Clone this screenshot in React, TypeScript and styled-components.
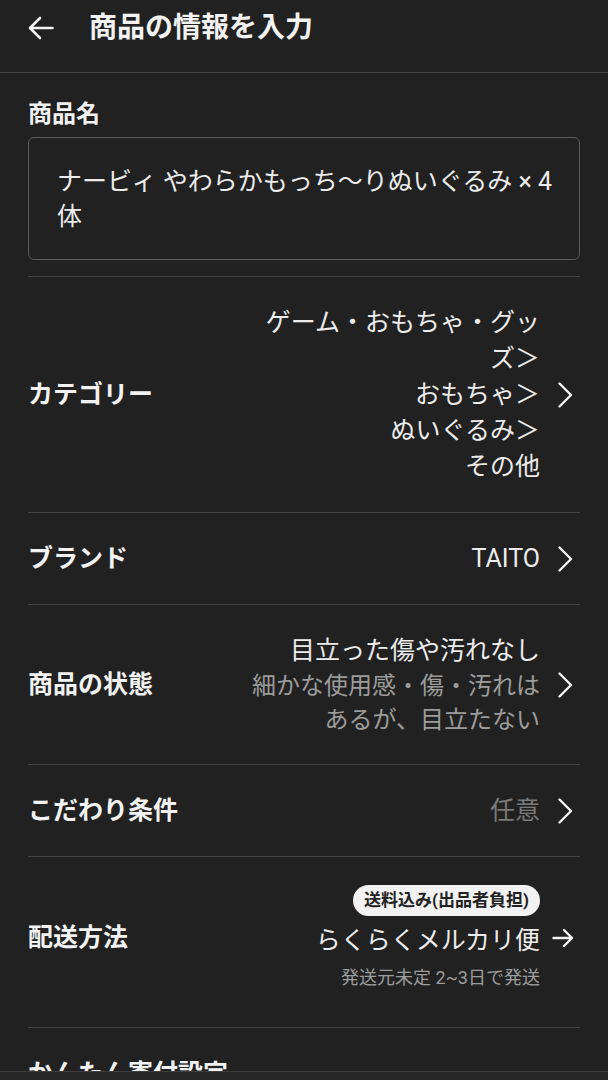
import styled, { createGlobalStyle } from 'styled-components';

const GlobalStyle = createGlobalStyle`
  html, body {
    margin: 0;
    padding: 0;
    background: #212121;
  }
  body {
    font-family: Roboto, "Noto Sans CJK JP", "Noto Sans", sans-serif;
    color: #f0f0f0;
  }
`;

const Page = styled.div`
  width: 608px;
  min-height: 1080px;
  background: #212121;
  overflow: hidden;
`;

const Header = styled.header`
  height: 73px;
  box-sizing: border-box;
  padding: 10px 28px 0;
  display: flex;
  align-items: flex-start;
  gap: 35px;
  border-bottom: 1px solid #434343;
`;

const BackButton = styled.button`
  width: 26px;
  height: 36px;
  padding: 0;
  border: none;
  background: none;
  display: flex;
  align-items: center;
  color: #f2f2f2;
`;

const Title = styled.h1`
  margin: 0;
  font-size: 28px;
  line-height: 36px;
  font-weight: 700;
  color: #f2f2f2;
`;

const Body = styled.main`
  padding: 24px 28px 0;
`;

const FieldLabel = styled.div`
  font-size: 24px;
  line-height: 34px;
  font-weight: 700;
  color: #f2f2f2;
  margin-bottom: 6px;
`;

const NameBox = styled.div`
  box-sizing: border-box;
  min-height: 123px;
  border: 1.5px solid #5c5c5c;
  border-radius: 6px;
  padding: 26px 22px 24px 28px;
  font-size: 25px;
  line-height: 35px;
  color: #ececec;
  margin-bottom: 16px;
`;

const Row = styled.div<{ $bottom?: number }>`
  display: flex;
  align-items: center;
  justify-content: space-between;
  border-top: 1px solid #434343;
  padding: 28px 0 ${(p) => p.$bottom ?? 27}px;
`;

const RowLabel = styled.div`
  font-size: 25px;
  line-height: 36px;
  font-weight: 700;
  color: #f2f2f2;
  white-space: nowrap;
`;

const RowRight = styled.div`
  display: flex;
  align-items: center;
`;

const Values = styled.div`
  max-width: 292px;
  display: flex;
  flex-direction: column;
  align-items: flex-end;
  text-align: right;
`;

const Value = styled.div<{ $tone?: 'main' | 'sub' | 'muted' }>`
  font-size: ${(p) => (p.$tone === 'sub' ? 24 : 25)}px;
  line-height: ${(p) => (p.$tone === 'sub' ? 34 : 36)}px;
  color: ${(p) => (p.$tone === 'sub' ? '#9c9c9c' : p.$tone === 'muted' ? '#7a7a7a' : '#ececec')};
  white-space: pre-line;
`;

const Icon = styled.span`
  width: 40px;
  display: flex;
  justify-content: flex-end;
  padding-right: 6px;
  box-sizing: border-box;
  color: #f2f2f2;
`;

const Badge = styled.span`
  height: 31px;
  box-sizing: border-box;
  padding: 0 11px;
  border-radius: 16px;
  background: #f2f2f2;
  color: #222;
  font-size: 17px;
  font-weight: 700;
  line-height: 31px;
  margin-bottom: 7px;
  white-space: nowrap;
`;

const Note = styled.div`
  font-size: 18px;
  line-height: 26px;
  color: #9c9c9c;
  margin-top: 6px;
`;

const Footer = styled.div`
  position: fixed;
  left: 0;
  right: 0;
  bottom: 0;
  height: 8px;
  background: #262626;
  border-top: 1px solid #3e3e3e;
`;

const Chevron = () => (
  <Icon>
    <svg width="18" height="26" viewBox="0 0 18 26" fill="none">
      <path d="M3.5 1.5 L15 13 L3.5 24.5" stroke="currentColor" strokeWidth="2.4" strokeLinecap="round" strokeLinejoin="round" />
    </svg>
  </Icon>
);

const ArrowRight = () => (
  <Icon>
    <svg width="22" height="20" viewBox="0 0 22 20" fill="none">
      <path d="M1.5 10 H20 M12 2 L20 10 L12 18" stroke="currentColor" strokeWidth="2.4" strokeLinecap="round" strokeLinejoin="round" />
    </svg>
  </Icon>
);

type Line = { text: string; tone?: 'main' | 'sub' | 'muted' };

const rows: { label: string; lines: Line[] }[] = [
  { label: 'カテゴリー', lines: [{ text: 'ゲーム・おもちゃ・グッズ＞\nおもちゃ＞\nぬいぐるみ＞\nその他' }] },
  { label: 'ブランド', lines: [{ text: 'TAITO' }] },
  {
    label: '商品の状態',
    lines: [
      { text: '目立った傷や汚れなし' },
      { text: '細かな使用感・傷・汚れはあるが、目立たない', tone: 'sub' },
    ],
  },
  { label: 'こだわり条件', lines: [{ text: '任意', tone: 'muted' }] },
];

const App = () => (
  <Page>
    <GlobalStyle />
    <Header>
      <BackButton aria-label="戻る">
        <svg width="26" height="24" viewBox="0 0 26 24" fill="none">
          <path d="M24.5 12 H2.5 M12 2 L2 12 L12 22" stroke="currentColor" strokeWidth="2.6" strokeLinecap="round" strokeLinejoin="round" />
        </svg>
      </BackButton>
      <Title>商品の情報を入力</Title>
    </Header>
    <Body>
      <FieldLabel>商品名</FieldLabel>
      <NameBox>ナービィ やわらかもっち〜りぬいぐるみ × 4体</NameBox>

      {rows.map((row) => (
        <Row key={row.label}>
          <RowLabel>{row.label}</RowLabel>
          <RowRight>
            <Values>
              {row.lines.map((line) => (
                <Value key={line.text} $tone={line.tone}>
                  {line.text}
                </Value>
              ))}
            </Values>
            <Chevron />
          </RowRight>
        </Row>
      ))}

      <Row $bottom={36}>
        <RowLabel>配送方法</RowLabel>
        <RowRight>
          <Values>
            <Badge>送料込み(出品者負担)</Badge>
            <Value>らくらくメルカリ便</Value>
            <Note>発送元未定 2~3日で発送</Note>
          </Values>
          <ArrowRight />
        </RowRight>
      </Row>

      <Row>
        <RowLabel>かんたん寄付設定</RowLabel>
      </Row>
    </Body>
    <Footer />
  </Page>
);

export default App;
